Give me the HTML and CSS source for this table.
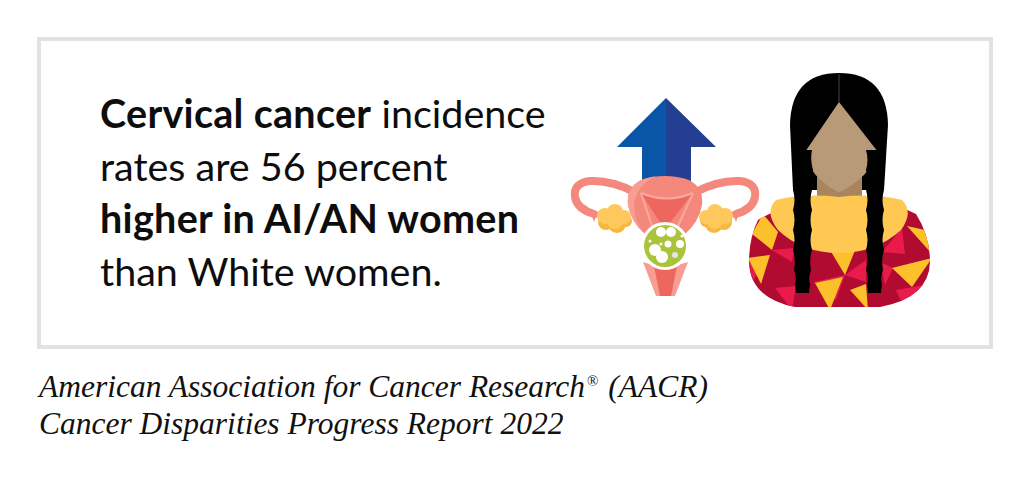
FILE: index.html
```html
<!DOCTYPE html>
<html lang="en">
<head>
<meta charset="utf-8">
<title>Cervical cancer incidence</title>
<link rel="stylesheet" href="styles.css">
</head>
<body>
<div class="page">
  <div class="card">
    <p class="stat"><strong>Cervical cancer</strong> incidence<br>rates are 56 percent<br><strong>higher in AI/AN women</strong><br>than White women.</p>
    <svg class="art" viewBox="560 60 380 255" xmlns="http://www.w3.org/2000/svg">
      <defs>
        <clipPath id="dress">
          <path d="M758 220 Q749 238 749 262 Q750 298 795 307 L880 307 Q929 298 930 262 Q930 236 916 214 Q880 196 839 199 Q798 196 758 220 Z"/>
        </clipPath>
      </defs>
      <!-- arrow -->
      <polygon points="666,98 617,147 642,147 642,190 666,190" fill="#0a56a6"/>
      <polygon points="666,98 716,147 691,147 691,190 666,190" fill="#243e92"/>
      <!-- tubes -->
      <path d="M634 192 Q612 180 590 181 Q573 183 575 197 Q577 209 594 214" fill="none" stroke="#f4887d" stroke-width="8" stroke-linecap="round"/>
      <path d="M696 192 Q718 180 740 181 Q757 183 755 197 Q753 209 736 214" fill="none" stroke="#f4887d" stroke-width="8" stroke-linecap="round"/>
      <!-- fimbriae -->
      <path d="M590 210 L594 222 L597 214 L600 224 L602 213 Z" fill="#f4887d"/>
      <path d="M740 210 L736 222 L733 214 L730 224 L728 213 Z" fill="#f4887d"/>
      <!-- ovaries -->
      <g fill="#f8b73e">
        <circle cx="606" cy="222" r="8"/><circle cx="617" cy="224" r="9"/><circle cx="626" cy="221" r="6"/>
        <circle cx="706" cy="221" r="6"/><circle cx="714" cy="224" r="9"/><circle cx="724" cy="222" r="8"/>
      </g>
      <g fill="#fec85d">
        <circle cx="605" cy="216" r="8"/><circle cx="615" cy="212" r="8"/><circle cx="624" cy="217" r="7"/><circle cx="615" cy="221" r="8"/>
        <circle cx="706" cy="217" r="7"/><circle cx="715" cy="212" r="8"/><circle cx="725" cy="216" r="8"/><circle cx="715" cy="221" r="8"/>
      </g>
      <!-- uterus body -->
      <path d="M641 180 Q665 172 689 180 Q704 188 702 205 Q699 222 685 234 L645 234 Q631 222 628 205 Q626 188 641 180 Z" fill="#f4887d"/>
      <path d="M641 180 Q650 177 656 176 Q636 186 634 205 Q634 222 645 234 Q631 222 628 205 Q626 188 641 180 Z" fill="#f79d92"/>
      <path d="M641 193 L652 226 M693 193 L678 226" stroke="#f9aaa0" stroke-width="2" fill="none"/>
      <path d="M641 193 Q667 204 693 193 L669 224 L661 224 Z" fill="#ee675e"/>
      <path d="M641 193 Q667 204 693 193" stroke="#f9aaa0" stroke-width="2" fill="none"/>
      <!-- vagina -->
      <path d="M643 262 Q665 270 688 262 L675 296 L656 296 Z" fill="#f79d92"/>
      <path d="M654 266 Q665 270 677 266 L671 296 L660 296 Z" fill="#ee675e"/>
      <!-- cervix lesion -->
      <circle cx="665" cy="246" r="24" fill="#ffffff"/>
      <circle cx="665" cy="246" r="21" fill="#a9c33a"/>
      <g fill="#ffffff">
        <circle cx="661" cy="232" r="5"/><circle cx="671" cy="232" r="5"/><circle cx="680" cy="244" r="4"/>
        <circle cx="668" cy="244" r="3.5"/><circle cx="655" cy="250" r="6"/><circle cx="662" cy="257" r="6"/>
        <circle cx="650" cy="241" r="1.5"/><circle cx="682" cy="236" r="1.5"/><circle cx="661" cy="244" r="1.5"/>
      </g>
      <circle cx="675" cy="255" r="3" fill="#e4e4e4"/>
      <!-- woman: hair back -->
      <path d="M793 190 L790 125 Q791 73 839 73 Q887 73 888 125 L884 190 Z" fill="#000"/>
      <!-- neck -->
      <path d="M817 165 L862 165 L862 208 Q839 218 817 208 Z" fill="#a8845f"/>
      <!-- dress -->
      <g clip-path="url(#dress)">
        <rect x="740" y="190" width="200" height="130" fill="#b10b31"/>
        <g fill="#e91b4b">
          <polygon points="772,250 795,248 792,262"/>
          <polygon points="775,288 796,286 792,310"/>
          <polygon points="845,275 866,260 866,282"/>
          <polygon points="813,282 845,275 836,300"/>
          <polygon points="882,252 902,228 905,254"/>
          <polygon points="880,262 893,268 885,285"/>
          <polygon points="896,290 930,284 905,310"/>
          <polygon points="749,262 770,256 752,282"/>
        </g>
        <g fill="#fcc02a">
          <polygon points="763,214 778,232 772,250 752,234"/>
          <polygon points="748,258 770,255 761,284"/>
          <polygon points="830,250 856,248 845,275"/>
          <polygon points="815,283 843,277 830,310"/>
          <polygon points="907,226 925,230 932,254"/>
          <polygon points="892,268 932,258 912,287"/>
          <polygon points="850,290 866,284 868,310"/>
        </g>
      </g>
      <!-- collar -->
      <path d="M776 200 Q805 193 839 197 Q874 193 902 200 Q914 212 901 230 Q876 253 839 253 Q802 253 778 230 Q764 212 776 200 Z" fill="#fec853"/>
      <!-- face -->
      <path d="M839 102 L805 152 Q808 170 822 181 Q832 190 839 192 Q846 190 857 181 Q872 170 878 152 Z" fill="#b99a78"/>
      <path d="M839 74 L839 102" stroke="#555" stroke-width="0.8"/>
      <!-- braids -->
      <path d="M792 150 L812 150 Q810 160 813 170 Q809 180 812 190 Q809 200 812 210 Q809 220 812 230 Q809 240 812 250 Q809 260 811 270 Q808 278 810 284 L809 293 L796 293 L795 284 Q797 278 794 270 Q796 260 793 250 Q796 240 793 230 Q796 220 793 210 Q796 200 793 190 Q796 180 793 170 Q796 160 792 150 Z" fill="#000"/>
      <path d="M866 150 L886 150 Q882 160 884 170 Q881 180 884 190 Q881 200 884 210 Q881 220 884 230 Q881 240 884 250 Q881 260 883 270 Q880 278 882 284 L881 293 L868 293 L867 284 Q869 278 866 270 Q869 260 866 250 Q869 240 866 230 Q869 220 866 210 Q869 200 866 190 Q869 180 866 170 Q869 160 866 150 Z" fill="#000"/>
    </svg>
  </div>
  <p class="source">American Association for Cancer Research<sup>®</sup> (AACR)<br>Cancer Disparities Progress Report 2022</p>
</div>
</body>
</html>
```

FILE: styles.css
```css
body {
  margin: 0;
  background: #ffffff;
}

.page {
  padding: 37px 38px 0 37px;
}

.card {
  box-sizing: border-box;
  width: 956px;
  height: 312px;
  border: 4px solid #e2e2e2;
  display: flex;
  padding: 0 49px 0 59px;
}

.stat {
  align-self: flex-start;
  margin: 46px 0 0 0;
  font-family: Lato, "Noto Sans", sans-serif;
  font-size: 39.5px;
  line-height: 52.5px;
  color: #0d0d0d;
}

.stat strong {
  font-weight: 700;
  letter-spacing: 0.3px;
}

.art {
  align-self: flex-start;
  margin: 19px 0 0 auto;
  width: 380px;
  height: 255px;
  flex: none;
}

.source {
  margin: 19px 0 0 2px;
  font-family: "Liberation Serif", serif;
  font-style: italic;
  font-size: 31.5px;
  line-height: 37px;
  color: #111111;
}

.source sup {
  font-size: 15px;
  font-style: normal;
  vertical-align: 11px;
  line-height: 0;
  margin: 0 2px;
}
```
